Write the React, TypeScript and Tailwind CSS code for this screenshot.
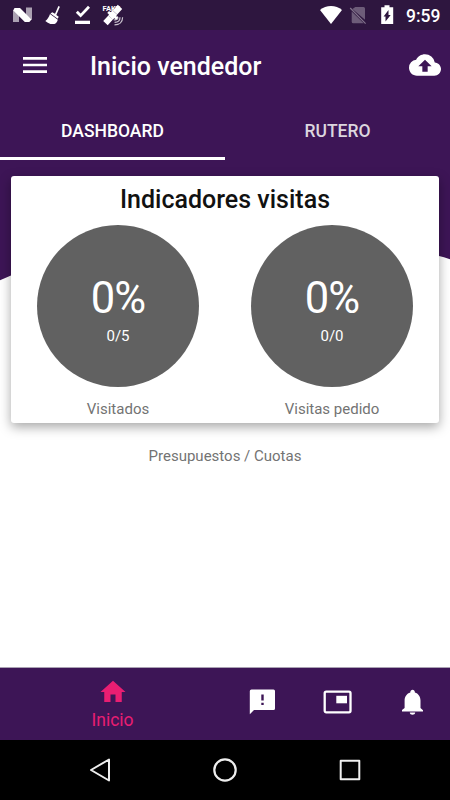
import type { ReactNode } from "react"
import { MdCloudUpload, MdHome, MdMenu } from "react-icons/md"


function StatusBar() {
  return (
    <div className="h-[30px] w-full bg-[#2e163f] flex justify-between text-white">
      <svg width="150" height="30" viewBox="0 0 150 30" fill="currentColor">
        <path d="M13 9.5l6 5V22h-6zM26 7.5h6V20l-6-5z" opacity="0.6" />
        <path d="M14.5 8H20l11.5 11.5-2.2 2.5h-4.5L13.3 10.5z" />
        <path d="M58.4 6l1.5.8-3.6 8.1 2.4 1.9-1 2-7.2-5.2 1.7-1.3 2.8 1.4z" />
        <path d="M50 14l7.8 5.7c-.5 2-1.8 3.7-3.4 4.4l-4-.2-2.6-1.2-2.5-1.8c2.2-1.3 3.6-3.8 4.7-6.9z" />
        <path d="M76.8 11.8l3.8 3.8 8.4-8.8" fill="none" stroke="currentColor" strokeWidth="2.8" />
        <path d="M75 20.7h15v3.3H75z" />
        <text x="102.5" y="11" fontSize="7.5" fontWeight="700" fontFamily="Roboto, sans-serif">FAKE</text>
        <path d="M117.8 4.8l4.4 4.2-5 5.6-4.4-4.2zM108.4 15.4l4.5 4.1-5.2 5.7-4.5-4.1z" />
        <path d="M112.5 10.3l4.8 4.5-4.4 4.9-4.7-4.4zM109 11l9 6.5-1.8 2-9-6.5z" />
        <path d="M114.8 19.8l2.7-2.8c1 1.2.2 3-2.7 2.8zM114.6 22.3c3.3 0 5.4-2 5.4-5.1M114.5 24.8c5 0 8.1-3 8.1-7.6" fill="none" stroke="currentColor" strokeWidth="1.2" opacity="0.75" />
      </svg>
      <div className="flex">
        <svg width="102" height="30" viewBox="304 0 102 30" fill="currentColor">
          <path d="M320 10c6-5.2 16-5.2 22 0l-11 14z" />
          <path d="M355.3 7h8.2q1.5 0 1.5 1.5v11.2L352.4 8.9zM351.7 11.5l12 11.8h-10.5q-1.5 0-1.5-1.5z" opacity="0.3" />
          <path d="M350.2 8l15.4 15.6" stroke="currentColor" strokeWidth="1.2" opacity="0.4" />
          <path d="M384.5 5.3h5v2h3.7V24h-12V7.3h3.3z" />
          <path d="M388.5 10v5h2.2l-5.2 6.5v-5h-1.9z" fill="#2e163f" />
        </svg>
        <span className="w-[44px] text-[17.5px] font-medium leading-[32px]">9:59</span>
      </div>
    </div>
  )
}

function Indicator(props: { percent: string; count: string; label: string }) {
  return (
    <div className="flex flex-1 flex-col items-center">
      <div className="w-[162px] h-[162px] rounded-full bg-[#616161] text-white flex flex-col items-center">
        <p className="mt-[48px] text-[43.5px] leading-[52px] tracking-[-0.8px]">{props.percent}</p>
        <p className="mt-[1px] text-[15px] leading-5">{props.count}</p>
      </div>
      <p className="mt-[12px] text-[15px] leading-5 text-[#737373]">{props.label}</p>
    </div>
  )
}

function NavItem(props: { children: ReactNode }) {
  return (
    <button className="w-[75px] h-full flex items-start justify-center text-white pt-[19px]">
      <svg width="30" height="30" viewBox="0.5 0.5 30 30" fill="currentColor">{props.children}</svg>
    </button>
  )
}

export default function App() {
  return (
    <div className="relative isolate w-[450px] h-[800px] bg-white overflow-hidden flex flex-col font-['Roboto',sans-serif]">
      <svg className="absolute top-0 left-0 -z-10" width="450" height="300" viewBox="0 0 450 300">
        <path d="M0 0H450V259.2Q444 257 438 255.8C330 228 150 210 11 275.4L0 280.3Z" fill="#3d1556" />
      </svg>

      <StatusBar />

      <header className="h-[70px] flex items-center pl-[19px] pr-[9px] text-white">
        <MdMenu size={32} />
        <h1 className="ml-[39px] mt-[3px] flex-1 text-[25px] font-medium">Inicio vendedor</h1>
        <MdCloudUpload size={32} />
      </header>

      <div className="h-[60px] grid grid-cols-2 text-center text-[17.5px] font-medium leading-[62px]">
        <div className="h-[60px] border-b-[3px] border-white text-white">DASHBOARD</div>
        <div className="h-[60px] text-[#dcd6df]">RUTERO</div>
      </div>

      <main className="flex-1">
        <section className="mt-4 mx-[11px] h-[247px] rounded-[3px] bg-white shadow-[0_4px_12px_rgba(0,0,0,0.35)]">
          <h2 className="h-[49px] pt-[6px] text-center text-[25px] leading-9 font-medium text-[#111111]">Indicadores visitas</h2>
          <div className="flex">
            <Indicator percent="0%" count="0/5" label="Visitados" />
            <Indicator percent="0%" count="0/0" label="Visitas pedido" />
          </div>
        </section>
        <p className="mt-[23px] text-center text-[15px] leading-5 text-[#737373]">Presupuestos / Cuotas</p>
      </main>

      <nav className="h-[73px] border-t border-[#aaa2b3] bg-[#3d1556] flex">
        <button className="w-[225px] flex flex-col items-center pt-[9px] text-[#e91e72]">
          <MdHome size={30} />
          <span className="mt-px text-[17.5px] leading-6">Inicio</span>
        </button>
        <NavItem>
          <path fillRule="evenodd" d="M4 3h22q1.5 0 1.5 1.5V22q0 1.5-1.5 1.5H6.5L2.3 27.7V4.5Q2.3 3 4 3zM13.8 8v6h2.4V8zM13.8 16.2v2.2h2.4v-2.2z" />
        </NavItem>
        <NavItem>
          <rect x="2.2" y="5.2" width="25.8" height="20.6" rx="1.5" fill="none" stroke="currentColor" strokeWidth="2.3" />
          <path d="M13.8 9.3h10.7v7.5H13.8z" />
        </NavItem>
        <NavItem>
          <path d="M25.5 23.8v1.1h-21v-1.3l2.6-2.1V14c0-4 2.3-7 5.7-8 0-3.6 4.6-3.6 4.6 0 3.4 1 5.6 4 5.6 8v7.5zM17.7 26c0 3-5.4 3-5.4 0z" />
        </NavItem>
      </nav>

      <div className="h-[60px] bg-black flex items-center justify-around px-[37px]">
        <svg width="26" height="26" viewBox="0 0 26 26" fill="none" stroke="#eeeeee" strokeWidth="2" strokeLinejoin="round">
          <path d="M4 13L22 2.5v21z" />
        </svg>
        <svg width="26" height="26" viewBox="0 0 26 26" fill="none" stroke="#eeeeee" strokeWidth="2.2">
          <circle cx="13" cy="13" r="10.7" />
        </svg>
        <svg width="26" height="26" viewBox="0 0 26 26" fill="none" stroke="#eeeeee" strokeWidth="2" strokeLinejoin="round">
          <path d="M3.7 3.7h18.6v18.6H3.7z" />
        </svg>
      </div>
    </div>
  )
}
